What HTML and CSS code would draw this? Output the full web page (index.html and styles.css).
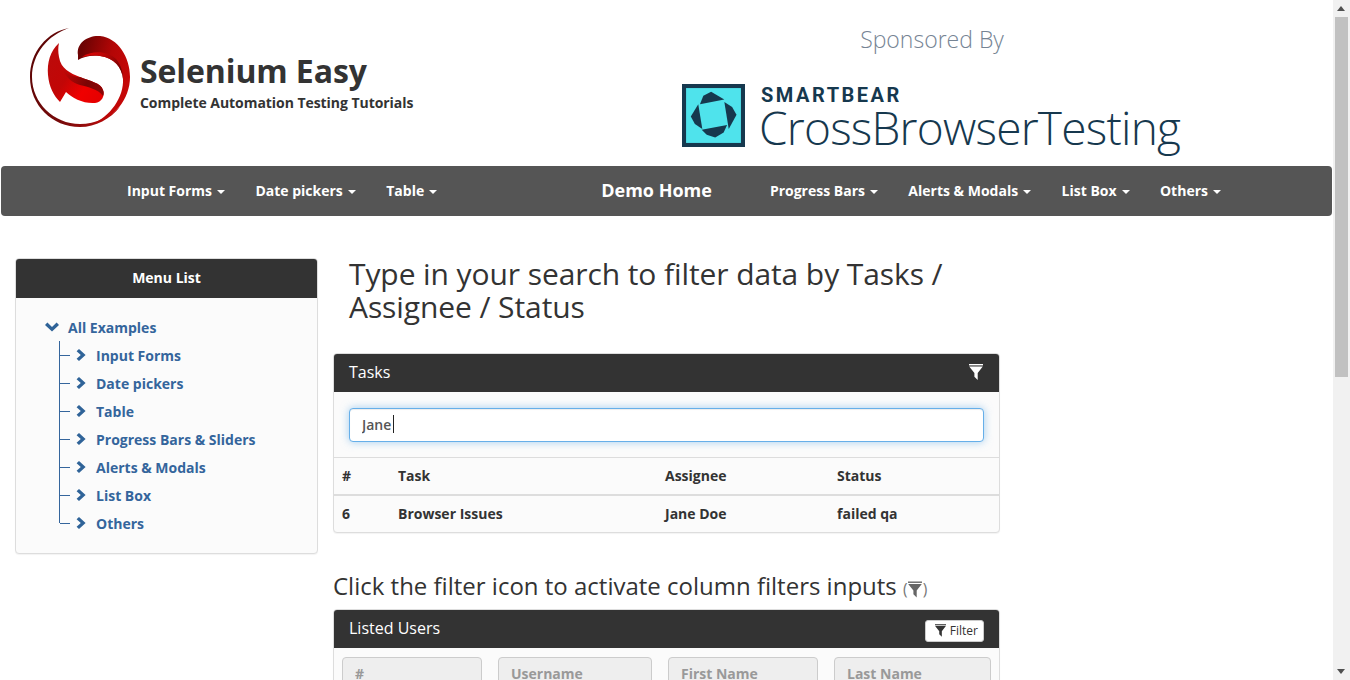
FILE: index.html
```html
<!DOCTYPE html>
<html lang="en">
<head>
    <meta charset="UTF-8">
    <meta name="viewport" content="width=device-width, initial-scale=1.0">
    <title>Selenium Easy - Table Filter</title>
    <link rel="stylesheet" href="styles.css">
</head>
<body>
    <svg class="defs" aria-hidden="true">
        <symbol id="funnel" viewBox="0 0 14 16">
            <path d="M0 0h14v1.4H0z"/>
            <path d="M0.2 2.4h13.6L8.7 9V16L5.4 12.8V9z"/>
        </symbol>
        <symbol id="chev-right" viewBox="0 0 10 12">
            <path d="M3 0L9.6 6L3 12L0.6 9.8L4.8 6L0.6 2.2z"/>
        </symbol>
        <symbol id="chev-down" viewBox="0 0 14 10">
            <path d="M0 3L2.4 0.6L7 5L11.6 0.6L14 3L7 9.6z"/>
        </symbol>
    </svg>

    <div class="window">
        <div class="page">
            <header class="top">
                <div class="brand">
                    <svg class="logo" viewBox="0 0 100 100">
                        <defs>
                            <linearGradient id="ring" x1="0" y1="0.2" x2="1" y2="0.7">
                                <stop offset="0" stop-color="#5a0505"/>
                                <stop offset="0.6" stop-color="#7a0a0a"/>
                                <stop offset="1" stop-color="#b30d0d"/>
                            </linearGradient>
                            <linearGradient id="upper" x1="0.1" y1="0.1" x2="1" y2="0.5">
                                <stop offset="0" stop-color="#6d0303"/>
                                <stop offset="0.55" stop-color="#b40606"/>
                                <stop offset="1" stop-color="#c60808"/>
                            </linearGradient>
                            <linearGradient id="lower" x1="0" y1="0.1" x2="1" y2="0.8">
                                <stop offset="0" stop-color="#bb0b0b"/>
                                <stop offset="0.45" stop-color="#c20606"/>
                                <stop offset="0.75" stop-color="#f00000"/>
                                <stop offset="1" stop-color="#e60000"/>
                            </linearGradient>
                            <linearGradient id="fold" x1="0" y1="0" x2="1" y2="0.3">
                                <stop offset="0" stop-color="#c60808"/>
                                <stop offset="0.7" stop-color="#7a0404"/>
                                <stop offset="1" stop-color="#8a0505"/>
                            </linearGradient>
                            <linearGradient id="glow" x1="0" y1="0" x2="1" y2="0.6">
                                <stop offset="0" stop-color="#e80606"/>
                                <stop offset="0.6" stop-color="#a80505"/>
                                <stop offset="1" stop-color="#700303"/>
                            </linearGradient>
                        </defs>
                        <path fill="url(#ring)" d="M39 1C17 5 0 25 0 50C0 78 22 100 50 100C66 100 80 92 90 80C79 90 66 97 50 97C24 97 2 76 2 50C2 27 18 8 39 1z"/>
                        <path fill="url(#upper)" d="M48 28C46 16 58 8 70 9C88 11 100 30 100 50C100 72 84 92 62 97C80 90 94 70 93 52C92 40 84 31 70 29C60 28 53 30 48 33z"/>
                        <path fill="url(#glow)" d="M52 30C62 23 78 24 86 32C91 38 93 45 93 52C92 40 84 31 70 29C62 28 57 29 52 30z"/>
                        <path fill="url(#lower)" d="M29 16C20 24 17 36 18 48C19 60 24 69 30 75L36 65C42 71 54 77 65 76C72 75 75 69 73 63C71 56 60 54 50 50C40 46 31 42 29 30C28 25 28 20 29 16z"/>
                        <path fill="url(#fold)" d="M32 42C38 48 44 50 50 50C60 54 71 56 73 63C74 65 74 67 73 69C68 62 58 60 50 58C42 56 36 50 32 42z"/>
                    </svg>
                    <div class="brand-text">
                        <div class="brand-name">Selenium Easy</div>
                        <div class="brand-tag">Complete Automation Testing Tutorials</div>
                    </div>
                </div>
                <div class="sponsor">
                    <div class="sponsor-label">Sponsored By</div>
                    <div class="sponsor-logo">
                        <svg class="cbt-icon" viewBox="22 22 186 186">
                            <rect x="28" y="28" width="174" height="174" fill="#4fe3ec" stroke="#16384e" stroke-width="12"/>
                            <path fill="#16384e" d="M75 82L85 57L108 45L147 68z"/>
                            <path fill="#16384e" d="M147 75L170 90L183 113L160 155z"/>
                            <path fill="#16384e" d="M80 157L155 143L145 165L120 180L95 172z"/>
                            <path fill="#16384e" d="M70 82L48 118L60 140L82 155z"/>
                        </svg>
                        <div class="cbt-text">
                            <div class="cbt-small">SMARTBEAR</div>
                            <div class="cbt-big">CrossBrowserTesting</div>
                        </div>
                    </div>
                </div>
            </header>

            <nav class="navbar">
                <ul class="nav-group nav-left">
                    <li>Input Forms<span class="caret"></span></li>
                    <li>Date pickers<span class="caret"></span></li>
                    <li>Table<span class="caret"></span></li>
                </ul>
                <div class="nav-home">Demo Home</div>
                <ul class="nav-group">
                    <li>Progress Bars<span class="caret"></span></li>
                    <li>Alerts &amp; Modals<span class="caret"></span></li>
                    <li>List Box<span class="caret"></span></li>
                    <li>Others<span class="caret"></span></li>
                </ul>
            </nav>

            <div class="content">
                <aside class="panel sidebar">
                    <div class="side-head">Menu List</div>
                    <div class="side-body">
                        <div class="tree-root">
                            <svg class="chev-down"><use href="#chev-down"/></svg>
                            <a>All Examples</a>
                        </div>
                        <ul class="tree">
                            <li><svg class="chev"><use href="#chev-right"/></svg><a>Input Forms</a></li>
                            <li><svg class="chev"><use href="#chev-right"/></svg><a>Date pickers</a></li>
                            <li><svg class="chev"><use href="#chev-right"/></svg><a>Table</a></li>
                            <li><svg class="chev"><use href="#chev-right"/></svg><a>Progress Bars &amp; Sliders</a></li>
                            <li><svg class="chev"><use href="#chev-right"/></svg><a>Alerts &amp; Modals</a></li>
                            <li><svg class="chev"><use href="#chev-right"/></svg><a>List Box</a></li>
                            <li><svg class="chev"><use href="#chev-right"/></svg><a>Others</a></li>
                        </ul>
                    </div>
                </aside>

                <main class="main">
                    <h2 class="title">Type in your search to filter data by Tasks / Assignee / Status</h2>

                    <section class="panel">
                        <div class="panel-head">
                            <span class="panel-title">Tasks</span>
                            <svg class="head-funnel"><use href="#funnel"/></svg>
                        </div>
                        <div class="search-box">
                            <input class="search-input" type="text" value="Jane">
                            <span class="text-caret"></span>
                        </div>
                        <table class="grid tasks-grid">
                            <thead>
                                <tr><th class="c-id">#</th><th class="c-task">Task</th><th class="c-who">Assignee</th><th>Status</th></tr>
                            </thead>
                            <tbody>
                                <tr><td>6</td><td>Browser Issues</td><td>Jane Doe</td><td>failed qa</td></tr>
                            </tbody>
                        </table>
                    </section>

                    <h3 class="subtitle">Click the filter icon to activate column filters inputs <small class="hint">(<svg class="hint-funnel"><use href="#funnel"/></svg>)</small></h3>

                    <section class="panel">
                        <div class="panel-head">
                            <span class="panel-title">Listed Users</span>
                            <button class="filter-btn"><svg class="btn-funnel"><use href="#funnel"/></svg>Filter</button>
                        </div>
                        <div class="filters">
                            <input class="filter-input f1" placeholder="#" disabled>
                            <input class="filter-input f2" placeholder="Username" disabled>
                            <input class="filter-input f3" placeholder="First Name" disabled>
                            <input class="filter-input f4" placeholder="Last Name" disabled>
                        </div>
                    </section>
                </main>
            </div>
        </div>

        <div class="scrollbar">
            <div class="arrow arrow-up"></div>
            <div class="track"><div class="thumb"></div></div>
            <div class="arrow arrow-down"></div>
        </div>
    </div>
</body>
</html>
```

FILE: styles.css
```css
* {
    box-sizing: border-box;
}

html, body {
    margin: 0;
    height: 680px;
    overflow: hidden;
}

body {
    font-family: 'Open Sans', sans-serif;
    font-size: 14px;
    font-weight: 700;
    color: #333;
    background-color: #fff;
}

.defs {
    display: none;
}

.window {
    display: flex;
    height: 680px;
}

.page {
    width: 1333px;
    overflow: hidden;
}

/* header */
.top {
    display: flex;
    height: 166px;
}

.brand {
    display: flex;
    width: 682px;
    padding: 27px 0 0 30px;
}

.logo {
    width: 100px;
    height: 100px;
}

.brand-text {
    margin: 22px 0 0 10px;
}

.brand-name {
    font-size: 32px;
    font-weight: 700;
    line-height: 44px;
    letter-spacing: -0.1px;
}

.brand-tag {
    font-size: 14px;
    line-height: 20px;
    letter-spacing: -0.05px;
}

.sponsor {
    flex: none;
    width: 500px;
}

.sponsor-label {
    height: 61px;
    margin-top: 23px;
    font-size: 23px;
    font-weight: 300;
    line-height: 32px;
    color: #768494;
    text-align: center;
}

.sponsor-logo {
    display: flex;
}

.cbt-icon {
    flex: none;
    width: 63px;
    height: 63px;
}

.cbt-text {
    margin-left: 14px;
    color: #16384e;
}

.cbt-small {
    margin-left: 2px;
    font-family: 'Roboto', sans-serif;
    font-size: 20px;
    font-weight: 700;
    letter-spacing: 2.5px;
    line-height: 22px;
}

.cbt-big {
    font-size: 46px;
    font-weight: 300;
    line-height: 42px;
    letter-spacing: -0.75px;
    white-space: nowrap;
}

/* navbar */
.navbar {
    display: flex;
    align-items: center;
    height: 50px;
    margin: 0 1px;
    padding: 0 0 2px 126px;
    background-color: #555;
    border-radius: 4px;
    color: #fff;
}

.nav-group {
    display: flex;
    gap: 30.4px;
    margin: 0;
    padding: 0;
    list-style: none;
}

.nav-home {
    margin: 0 58px 0 164px;
    font-size: 18px;
    font-weight: 700;
}

.caret {
    display: inline-block;
    margin-left: 5px;
    vertical-align: middle;
    border-top: 4px solid #fff;
    border-left: 4px solid transparent;
    border-right: 4px solid transparent;
}

/* body columns */
.content {
    display: flex;
    align-items: flex-start;
    gap: 15px;
    padding: 42px 0 0 15px;
}

.panel {
    background-color: #fbfbfb;
    border: 1px solid #ddd;
    border-radius: 4px;
    box-shadow: 0 1px 1px rgba(0, 0, 0, .05);
}

.sidebar {
    width: 303px;
}

.side-head {
    height: 39px;
    padding-bottom: 2px;
    background-color: #333;
    border-radius: 3px 3px 0 0;
    color: #fff;
    line-height: 37px;
    text-align: center;
}

.side-body {
    padding: 15px 0 16px 29px;
    color: #34659c;
}

.tree-root {
    display: flex;
    align-items: center;
    height: 28px;
}

.chev-down {
    width: 14px;
    height: 10px;
    margin-right: 9px;
}

.chev-down, .chev {
    fill: #2f6398;
}

.tree {
    position: relative;
    margin: 0 0 0 14px;
    padding: 0;
    list-style: none;
}

.tree li {
    position: relative;
    display: flex;
    align-items: center;
    height: 28px;
    border-left: 1px solid #34659c;
}

.tree li::before {
    content: "";
    width: 10px;
    height: 1px;
    margin-right: 6px;
    background-color: #34659c;
}

.tree li:last-child {
    border-left-color: transparent;
}

.tree li:last-child::after {
    content: "";
    position: absolute;
    left: -1px;
    top: 0;
    width: 1px;
    height: 14px;
    background-color: #34659c;
}

.chev {
    width: 10px;
    height: 12px;
    margin-right: 10px;
}

.main {
    width: 667px;
}

.title {
    margin: -1px 0 30px;
    padding: 0 40px 0 16px;
    font-size: 30px;
    font-weight: 400;
    line-height: 33px;
    letter-spacing: -0.09px;
}

.panel-head {
    display: flex;
    align-items: center;
    justify-content: space-between;
    height: 38px;
    padding: 0 16px 2px 15px;
    background-color: #333;
    border-radius: 3px 3px 0 0;
    color: #fff;
}

.panel-title {
    font-size: 16px;
    font-weight: 400;
}

.head-funnel {
    width: 14px;
    height: 16px;
    fill: #fff;
}

.search-box {
    position: relative;
    padding: 16px 15px 15px;
}

.search-input {
    display: block;
    width: 100%;
    height: 34px;
    padding: 5px 12px 7px;
    border: 1px solid #66afe9;
    border-radius: 4px;
    outline: none;
    box-shadow: inset 0 1px 1px rgba(0, 0, 0, .075), 0 0 8px rgba(102, 175, 233, .6);
    font: 600 14px 'Open Sans', sans-serif;
    color: #555;
}

.text-caret {
    position: absolute;
    left: 59px;
    top: 23px;
    width: 1px;
    height: 18px;
    background-color: #222;
}

.grid {
    width: 100%;
    border-collapse: collapse;
    table-layout: fixed;
}

.grid th, .grid td {
    padding: 8px;
    text-align: left;
    line-height: 20px;
}

.grid th {
    height: 37px;
    padding-bottom: 7px;
    border-top: 1px solid #ddd;
    border-bottom: 2px solid #ddd;
}

.grid td {
    height: 37px;
}

.c-id { width: 56px; }
.c-task { width: 267px; }
.c-who { width: 172px; }

.subtitle {
    margin: 38px 0 5px;
    font-size: 24px;
    font-weight: 400;
    line-height: 29px;
}

.hint {
    font-size: 15.6px;
    color: #777;
}

.hint-funnel {
    width: 14px;
    height: 17px;
    margin-right: 1px;
    fill: #666;
    vertical-align: -3px;
}

.filter-btn {
    display: flex;
    align-items: center;
    height: 22px;
    margin: 6px -1px 0 0;
    padding: 0 5px 0 9px;
    background-color: #fff;
    border: 1px solid #ccc;
    border-radius: 3px;
    font: 400 12px 'Open Sans', sans-serif;
    color: #333;
}

.btn-funnel {
    width: 11px;
    height: 13px;
    margin-right: 4px;
    fill: #333;
}

.filters {
    display: flex;
    padding: 9px 8px 8px;
}

.filter-input {
    height: 34px;
    padding: 6px 12px;
    background-color: #eee;
    border: 1px solid #ccc;
    border-radius: 4px;
    font: 700 14px 'Open Sans', sans-serif;
}

.filter-input::placeholder {
    color: #999;
    opacity: 1;
}

.f1 { width: 140px; }
.f2 { width: 154px; margin-left: 16px; }
.f3 { width: 150px; margin-left: 16px; }
.f4 { width: 157px; margin-left: 16px; }

/* fake scrollbar, the photo has one */
.scrollbar {
    display: flex;
    flex-direction: column;
    width: 17px;
    height: 680px;
    background-color: #f1f1f1;
}

.arrow {
    flex: none;
    width: 0;
    height: 0;
    margin: 6px 4px;
    border-left: 4.5px solid transparent;
    border-right: 4.5px solid transparent;
}

.arrow-up {
    border-bottom: 5px solid #505050;
}

.arrow-down {
    border-top: 5px solid #505050;
}

.track {
    flex: 1;
    padding: 0 2px;
}

.thumb {
    height: 360px;
    background-color: #c1c1c1;
}
```
